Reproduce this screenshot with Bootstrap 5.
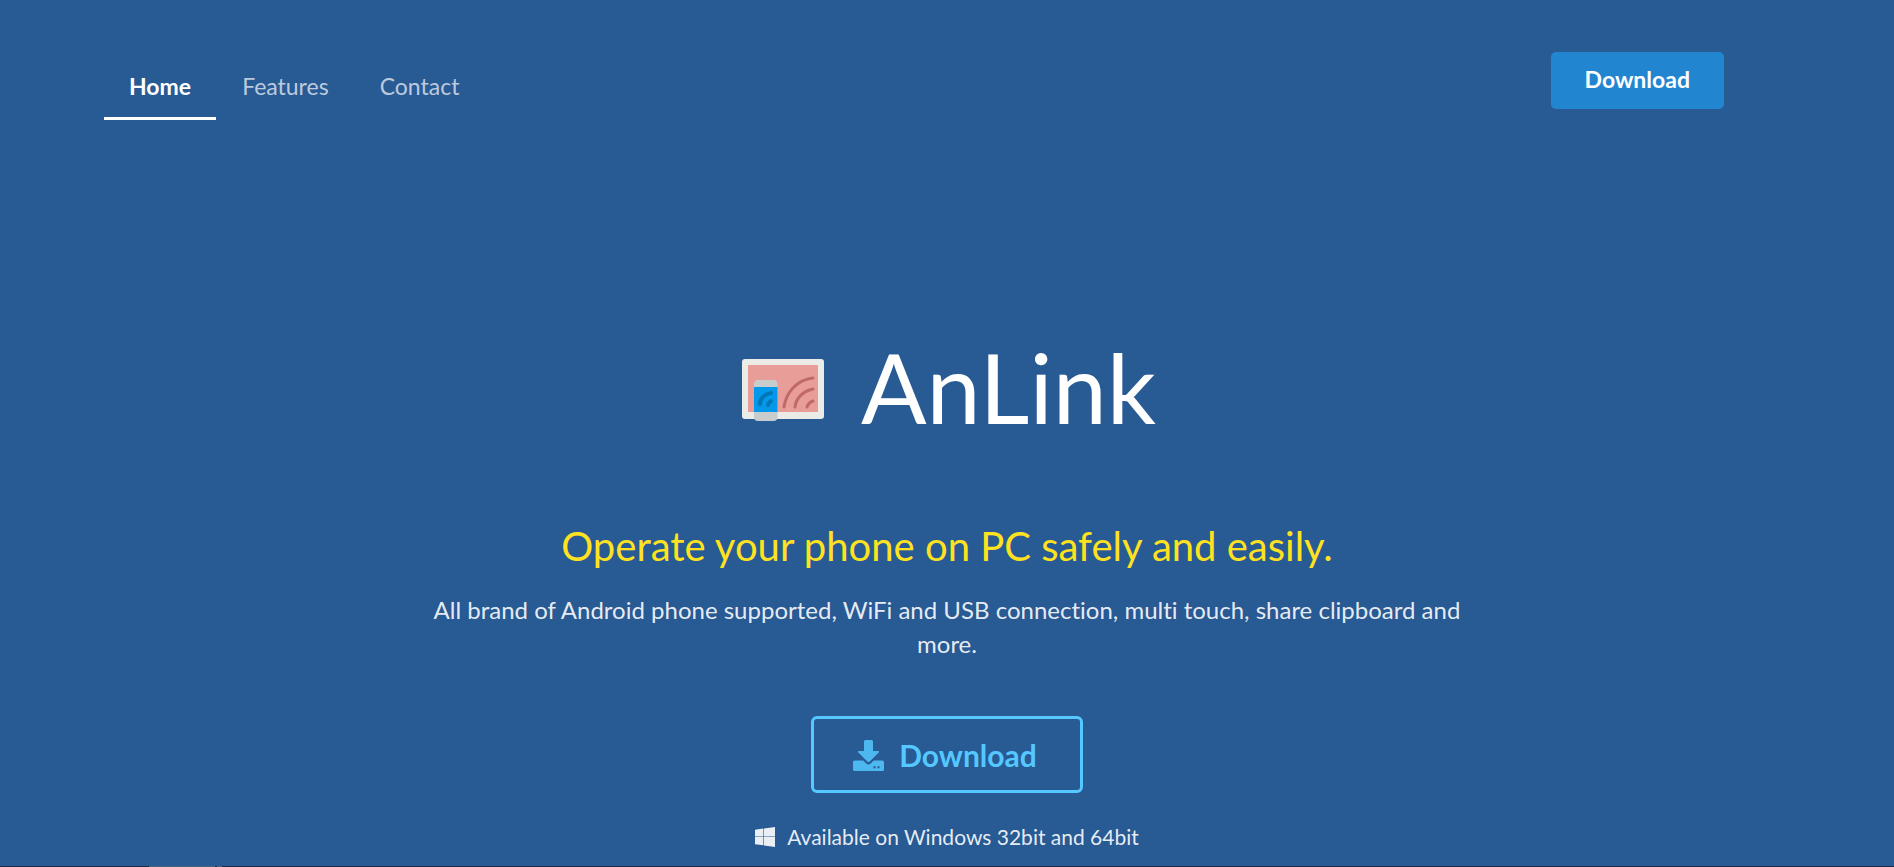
<!DOCTYPE html>
<html lang="en">
<head>
<meta charset="utf-8">
<meta name="viewport" content="width=device-width, initial-scale=1">
<title>AnLink</title>
<link href="https://cdn.jsdelivr.net/npm/bootstrap@5.3.0/dist/css/bootstrap.min.css" rel="stylesheet">
<style>
body { background: #285a94; color: #fff; font-family: Lato, "Liberation Sans", sans-serif; font-size: 24px; line-height: 34px; font-variant-ligatures: none; }
.topbar { padding: 52px 170px 0 104px; }
.topbar .nav-link { color: rgba(255,255,255,.7); font-size: 23px; padding: 17px 25px 14px; border-bottom: 3px solid transparent; }
.topbar .nav-link.active { color: #fff; font-weight: 700; border-color: #fff; }
.topbar .nav { gap: 1px; }
.btn-get { background: #2185d0; color: #fff; font-size: 23px; line-height: 24px; font-weight: 700; padding: 15px 34px 18px; border-radius: 5px; }
.btn-get:hover { background: #1678c2; color: #fff; }
.hero { width: 56%; padding-top: 211px; }
.hero h1 { font-size: 97px; line-height: 112px; font-weight: 400; gap: 36px; padding-left: 4px; margin-bottom: 76px; }
.hero h1 svg { margin-top: 6px; }
.hero h2 { color: #ffe21f; font-size: 40px; line-height: 54px; font-weight: 400; margin-bottom: 20px; }
.soft { color: rgba(255,255,255,.9); }
.btn-main { color: #54c8ff; border: 3px solid #54c8ff; font-size: 30px; line-height: 32px; font-weight: 700; padding: 20px 43px 19px 39px; border-radius: 6px; gap: 15px; margin: 55px 0 27px; }
.btn-main:hover { color: #fff; border-color: #fff; }
.platform { font-size: 21px; gap: 12px; }
.taskline { height: 1px; background: #1c2a48; }
.taskline span { width: 66px; height: 1px; margin-left: 149px; background: #46637f; }
.taskline span + span { width: 5px; margin-left: 2px; }
</style>
<script defer src="https://cdn.jsdelivr.net/npm/bootstrap@5.3.0/dist/js/bootstrap.bundle.min.js"></script>
</head>
<body class="d-flex flex-column min-vh-100">
<header class="topbar d-flex justify-content-between align-items-start">
  <nav class="nav">
    <a class="nav-link active" aria-current="page" href="#">Home</a>
    <a class="nav-link" href="#features">Features</a>
    <a class="nav-link" href="#contact">Contact</a>
  </nav>
  <button type="button" class="btn btn-get border-0">Download</button>
</header>
<main class="hero mx-auto text-center">
  <h1 class="d-flex justify-content-center align-items-center">
    <svg width="83" height="62" viewBox="0 0 83 62" aria-hidden="true">
      <rect x="0" y="0" width="82" height="60" rx="3" fill="#ebebe8"/>
      <path fill="#e89d98" d="M6 6h70v47H6z"/>
      <g fill="none" stroke="#c0696a" stroke-width="3" stroke-linecap="round"><path d="M42 48C44 34 54 21 71 19"/><path d="M53 48C54 39 61 32 71 30"/><path d="M65 48C66 45 68 43 71 42"/></g>
      <rect x="12" y="21" width="23.500" height="41" rx="4" fill="#c9cccd"/>
      <path fill="#0398ea" d="M12 28h23.500v25H12z"/>
      <g fill="none" stroke="#0277b8" stroke-width="4" stroke-linecap="round"><path d="M18 45C18 39 23 35 29 34"/><path d="M26 46C26 44 28 43 29 42"/></g>
    </svg>
    <span>AnLink</span>
  </h1>
  <h2>Operate your phone on PC safely and easily.</h2>
  <p class="soft mb-0">All brand of Android phone supported, WiFi and USB connection, multi touch, share clipboard and more.</p>
  <button type="button" class="btn btn-main d-inline-flex align-items-center">
    <svg width="31" height="31" viewBox="0 0 31 31" fill="currentColor" opacity=".85" aria-hidden="true"><path fill-rule="evenodd" d="M12.500 0h6q1.500 0 1.500 1.500V11h5.200q1.500 0 .5 1.400l-9 9.200q-1.200 1-2.400 0l-9-9.200q-1-1.400.5-1.400H11V1.500Q11 0 12.500 0zM1.500 20.500h8.800l3 3q2.200 2 4.400 0l3-3h8.800q1.500 0 1.500 1.500v7.500q0 1.500-1.500 1.500h-28Q0 31 0 29.500V22q0-1.500 1.500-1.500zM20.500 26.300v2h2v-2zM24.500 26.300v2h2v-2z"/></svg>
    <span>Download</span>
  </button>
  <div class="platform soft d-flex justify-content-center align-items-center">
    <svg width="20" height="20" viewBox="0 0 20 20" fill="currentColor" aria-hidden="true"><path d="M0 2.800 8.400 1.600V9.200H0zM9 1.500 20 0V9.200H9zM0 9.800H8.400V18.300L0 17.200zM9 9.800H20V20L9 18.400z"/></svg>
    <span>Available on Windows 32bit and 64bit</span>
  </div>
</main>
<div class="taskline d-flex mt-auto"><span></span><span></span></div>
</body>
</html>
